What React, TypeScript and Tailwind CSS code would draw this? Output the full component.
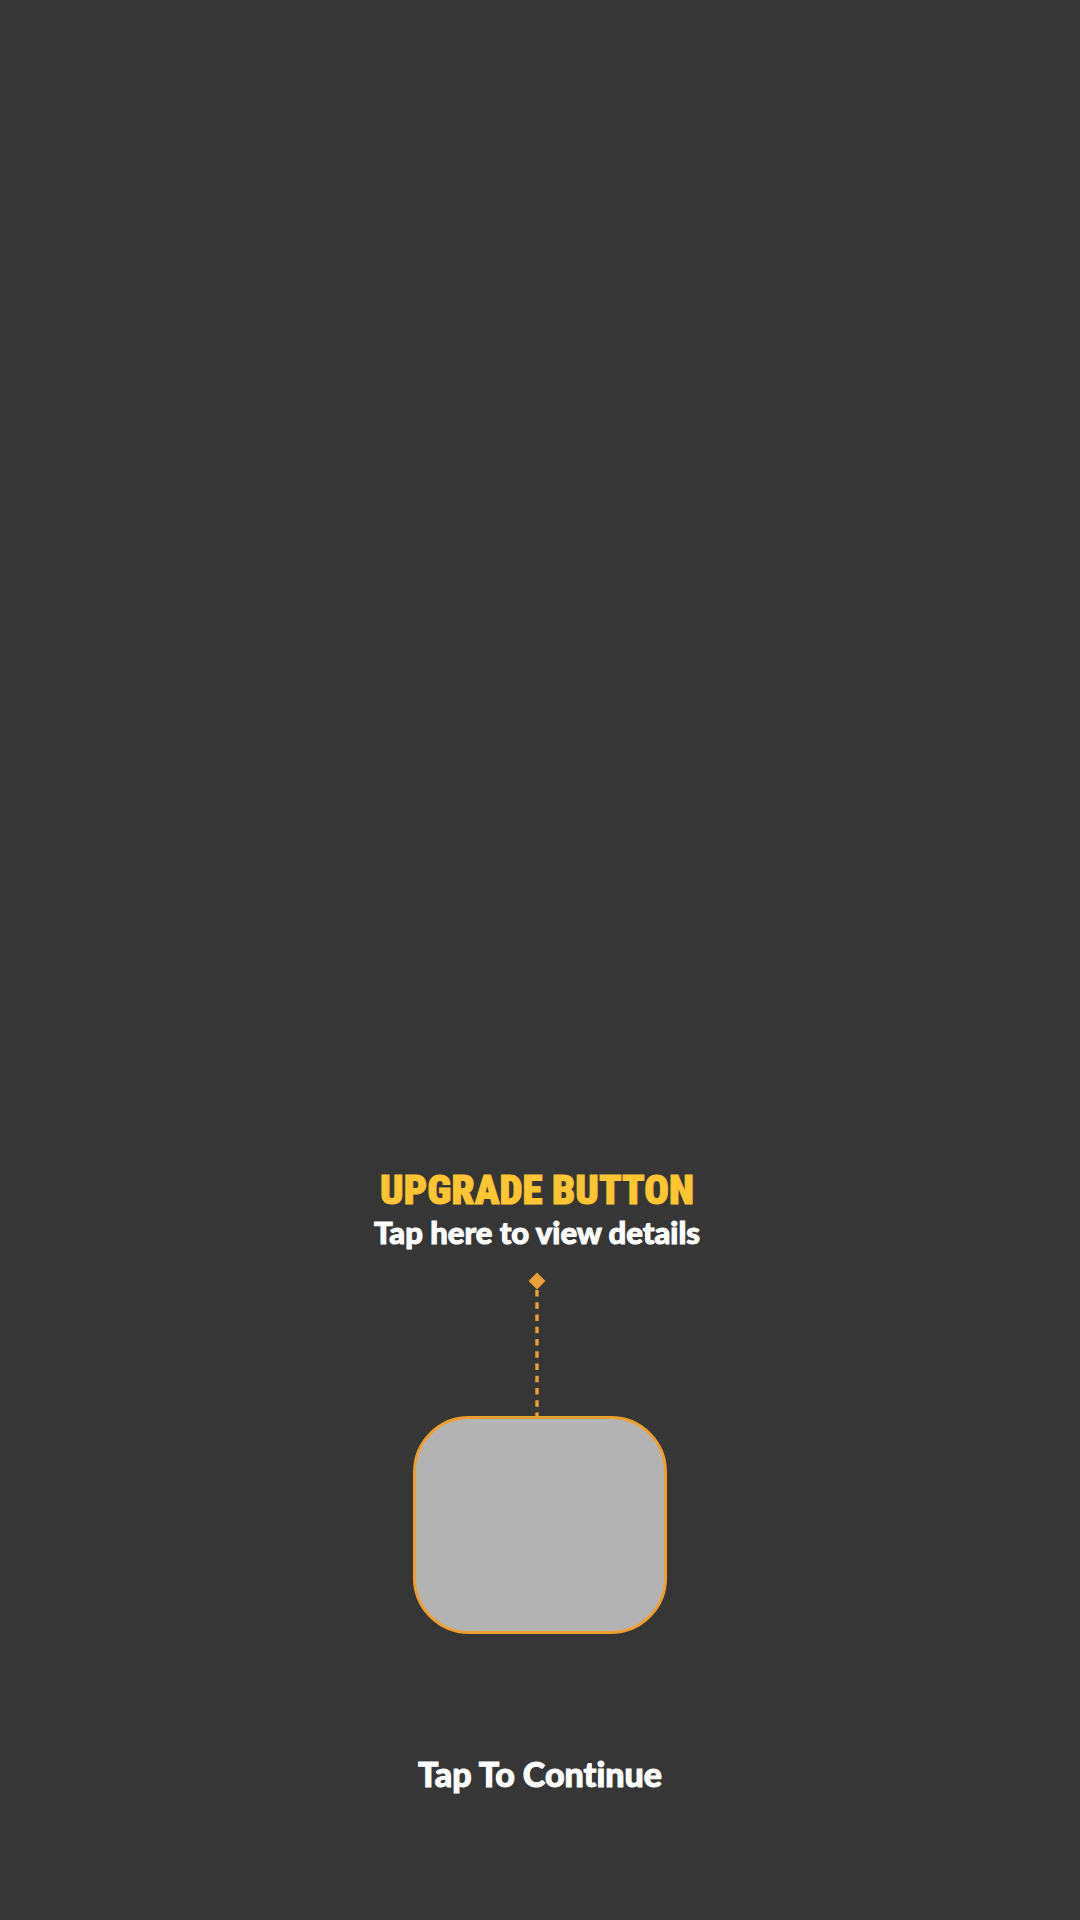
function Pointer() {
  return (
    <svg className="block h-[144px] w-5" viewBox="0 0 20 144" fill="none" aria-hidden="true">
      <path d="M10 .5 18.5 9 10 17.5 1.5 9Z" fill="#ec9f38" />
      <path d="M10 18V144" stroke="#ec9f38" strokeWidth="3.4" strokeDasharray="6.4 5.85" />
    </svg>
  );
}

export default function App() {
  return (
    <main className="flex min-h-screen flex-col items-center justify-end bg-[#363636] pb-[122px] font-['Lato','Roboto',sans-serif] font-black text-white [-webkit-text-stroke:1px_currentColor] [font-variant-ligatures:none]">
      <section className="flex flex-col items-center pr-[6px] text-center">
        <h1 className="font-['Roboto_Condensed','Roboto',sans-serif] text-[41px] leading-[44px] text-[#ffc533] [-webkit-text-stroke:1px_currentColor]">
          UPGRADE BUTTON
        </h1>
        <p className="text-[31px] leading-[40px]">Tap here to view details</p>
        <div className="mt-5">
          <Pointer />
        </div>
      </section>
      <button
        type="button"
        aria-label="Upgrade"
        className="h-[218px] w-[254px] rounded-[56px] border-3 border-[#ef9f30] bg-[#b3b3b3]"
      />
      <button type="button" className="mt-[120px] pb-1 text-[34px] leading-[40px]">
        Tap To Continue
      </button>
    </main>
  );
}
